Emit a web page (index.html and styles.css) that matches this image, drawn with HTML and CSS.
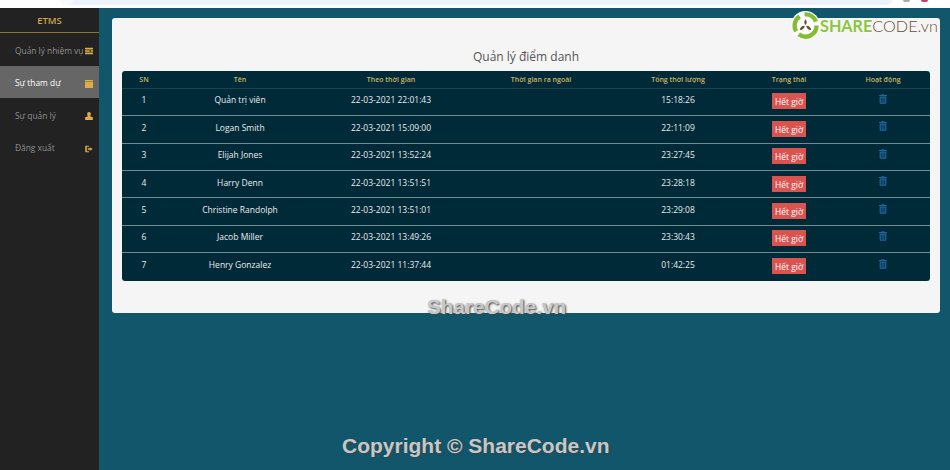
FILE: index.html
```html
<!DOCTYPE html>
<html lang="vi">
<head>
    <meta charset="UTF-8">
    <title>ETMS - Quản lý điểm danh</title>
    <link rel="stylesheet" href="styles.css">
</head>
<body>
    <div class="browser-strip">
        <div class="url-bar"><span class="url-home"></span></div>
        <span class="tool tool-grey"></span>
        <span class="tool tool-pink"></span>
    </div>

    <div class="layout">
        <nav class="sidebar">
            <div class="brand">ETMS</div>
            <a class="nav-item">
                <span>Quản lý nhiệm vụ</span>
                <svg class="nav-icon" viewBox="0 0 10 10"><path d="M0 1h10v2.200H0zM0 4h6v2H0zM7 4h3v2H7zM0 6.900h10V9H0z"/></svg>
            </a>
            <a class="nav-item active">
                <span>Sự tham dự</span>
                <svg class="nav-icon" viewBox="0 0 10 10"><path d="M0 0h10v1.800H0zM0 2.600h10V10H0z"/></svg>
            </a>
            <a class="nav-item">
                <span>Sự quản lý</span>
                <svg class="nav-icon" viewBox="0 0 10 10"><path d="M5 0c1.500 0 2.300 1.100 2.300 2.700 0 1.100-.5 2.100-1 2.700l3.500 1.300V10H.2V6.700l3.500-1.300c-.5-.6-1-1.600-1-2.700C2.700 1.100 3.500 0 5 0z"/></svg>
            </a>
            <a class="nav-item">
                <span>Đăng xuất</span>
                <svg class="nav-icon" viewBox="0 0 10 10"><path d="M1.500 1H5v1.300H2.300v5.400H5V9H1.500C.8 9 .3 8.500.3 7.800V2.200C.3 1.500.8 1 1.500 1zM6 2.800 9.700 5 6 7.200V6H3.500V4H6z"/></svg>
            </a>
        </nav>

        <main class="content">
            <section class="card">
                <h1 class="card-title">Quản lý điểm danh</h1>
                <table class="attendance">
                    <thead>
                        <tr>
                            <th class="col-sn">SN</th>
                            <th class="col-name">Tên</th>
                            <th class="col-in">Theo thời gian</th>
                            <th class="col-out">Thời gian ra ngoài</th>
                            <th class="col-total">Tổng thời lượng</th>
                            <th class="col-status">Trạng thái</th>
                            <th class="col-action">Hoạt động</th>
                        </tr>
                    </thead>
                    <tbody>
                        <tr>
                            <td>1</td><td>Quản trị viên</td><td>22-03-2021 22:01:43</td><td></td><td>15:18:26</td>
                            <td><span class="badge">Hết giờ</span></td>
                            <td><svg class="trash" viewBox="0 0 10 12"><path d="M3.500 0h3l.5 1h3v1.300H0V1h3zM.8 3h8.400v8c0 .6-.4 1-1 1H1.800c-.6 0-1-.4-1-1zM2.300 4.300v6.400h1V4.300zm2.200 0v6.400h1V4.300zm2.200 0v6.400h1V4.300z"/></svg></td>
                        </tr>
                        <tr>
                            <td>2</td><td>Logan Smith</td><td>22-03-2021 15:09:00</td><td></td><td>22:11:09</td>
                            <td><span class="badge">Hết giờ</span></td>
                            <td><svg class="trash" viewBox="0 0 10 12"><path d="M3.500 0h3l.5 1h3v1.300H0V1h3zM.8 3h8.400v8c0 .6-.4 1-1 1H1.800c-.6 0-1-.4-1-1zM2.300 4.300v6.400h1V4.300zm2.200 0v6.400h1V4.300zm2.200 0v6.400h1V4.300z"/></svg></td>
                        </tr>
                        <tr>
                            <td>3</td><td>Elijah Jones</td><td>22-03-2021 13:52:24</td><td></td><td>23:27:45</td>
                            <td><span class="badge">Hết giờ</span></td>
                            <td><svg class="trash" viewBox="0 0 10 12"><path d="M3.500 0h3l.5 1h3v1.300H0V1h3zM.8 3h8.400v8c0 .6-.4 1-1 1H1.800c-.6 0-1-.4-1-1zM2.300 4.300v6.400h1V4.300zm2.200 0v6.400h1V4.300zm2.200 0v6.400h1V4.300z"/></svg></td>
                        </tr>
                        <tr>
                            <td>4</td><td>Harry Denn</td><td>22-03-2021 13:51:51</td><td></td><td>23:28:18</td>
                            <td><span class="badge">Hết giờ</span></td>
                            <td><svg class="trash" viewBox="0 0 10 12"><path d="M3.500 0h3l.5 1h3v1.300H0V1h3zM.8 3h8.400v8c0 .6-.4 1-1 1H1.800c-.6 0-1-.4-1-1zM2.300 4.300v6.400h1V4.300zm2.200 0v6.400h1V4.300zm2.200 0v6.400h1V4.300z"/></svg></td>
                        </tr>
                        <tr>
                            <td>5</td><td>Christine Randolph</td><td>22-03-2021 13:51:01</td><td></td><td>23:29:08</td>
                            <td><span class="badge">Hết giờ</span></td>
                            <td><svg class="trash" viewBox="0 0 10 12"><path d="M3.500 0h3l.5 1h3v1.300H0V1h3zM.8 3h8.400v8c0 .6-.4 1-1 1H1.800c-.6 0-1-.4-1-1zM2.300 4.300v6.400h1V4.300zm2.200 0v6.400h1V4.300zm2.200 0v6.400h1V4.300z"/></svg></td>
                        </tr>
                        <tr>
                            <td>6</td><td>Jacob Miller</td><td>22-03-2021 13:49:26</td><td></td><td>23:30:43</td>
                            <td><span class="badge">Hết giờ</span></td>
                            <td><svg class="trash" viewBox="0 0 10 12"><path d="M3.500 0h3l.5 1h3v1.300H0V1h3zM.8 3h8.400v8c0 .6-.4 1-1 1H1.800c-.6 0-1-.4-1-1zM2.300 4.300v6.400h1V4.300zm2.200 0v6.400h1V4.300zm2.200 0v6.400h1V4.300z"/></svg></td>
                        </tr>
                        <tr>
                            <td>7</td><td>Henry Gonzalez</td><td>22-03-2021 11:37:44</td><td></td><td>01:42:25</td>
                            <td><span class="badge">Hết giờ</span></td>
                            <td><svg class="trash" viewBox="0 0 10 12"><path d="M3.500 0h3l.5 1h3v1.300H0V1h3zM.8 3h8.400v8c0 .6-.4 1-1 1H1.800c-.6 0-1-.4-1-1zM2.300 4.300v6.400h1V4.300zm2.200 0v6.400h1V4.300zm2.200 0v6.400h1V4.300z"/></svg></td>
                        </tr>
                    </tbody>
                </table>
            </section>
        </main>
    </div>

    <!-- watermarks lie over the page -->
    <div class="logo">
        <svg class="logo-mark" viewBox="0 0 30 30">
            <circle cx="15" cy="15" r="15" fill="#fff"/>
            <g fill="none" stroke="#84bd34" stroke-width="4.500">
                <path d="M14 3.500A11.500 11.500 0 0 1 25.800 11"/>
                <path d="M26.500 15A11.500 11.500 0 0 1 8 24.100"/>
                <path d="M5.300 21A11.500 11.500 0 0 1 9 5.500"/>
            </g>
            <path d="M15 8.500c1.700 1.900 1.700 4.300 0 6-1.700-1.700-1.700-4.100 0-6zM9 19.500c.4-2.700 2.500-4.300 5.300-4.300-.4 2.800-2.600 4.700-5.300 4.300zM21 19.500c-2.700.4-4.900-1.500-5.300-4.300 2.800 0 4.900 1.600 5.300 4.300z" fill="#6f4c2c"/>
        </svg>
        <span class="logo-text"><b>SHARE</b>CODE<i>.vn</i></span>
    </div>
    <div class="mark mark-small">ShareCode.vn</div>
    <div class="mark mark-large">Copyright © ShareCode.vn</div>
</body>
</html>
```

FILE: styles.css
```css
html, body {
    margin: 0;
    height: 100%;
    overflow: hidden;
}
body {
    font-family: "Open Sans", "Noto Sans", sans-serif;
    font-size: 8.5px;
    background: #11566b;
    color: #fff;
    display: flex;
    flex-direction: column;
}
.browser-strip {
    height: 8px;
    background: #fff;
    padding-left: 60px;
    display: flex;
    flex: none;
}
.url-bar {
    width: 832px;
    height: 4.500px;
    background: #eef2fa;
    border-radius: 0 0 8px 8px;
    margin-right: 11px;
}
.url-home {
    display: block;
    width: 13px;
    height: 4.500px;
    background: #f8f9fd;
    border-radius: 0 0 7px 7px;
}
.tool {
    height: 1.500px;
    border-radius: 0 0 2px 2px;
}
.tool-grey {
    width: 7px;
    margin-right: 11px;
    background: #aaa;
}
.tool-pink {
    width: 7px;
    height: 2px;
    background: #c2406e;
}
.layout {
    flex: 1;
    display: flex;
    min-height: 0;
}

/* sidebar */
.sidebar {
    width: 99px;
    flex: none;
    background: #222;
}
.brand {
    height: 25px;
    line-height: 25px;
    box-sizing: border-box;
    text-align: center;
    font-size: 9.500px;
    font-weight: 600;
    color: #d1a645;
    border-bottom: 1px solid #8a7235;
}
.nav-item {
    display: flex;
    justify-content: space-between;
    align-items: center;
    height: 32.500px;
    padding: 2px 6px 0 15px;
    box-sizing: border-box;
    font-size: 8.400px;
    color: #8f8f8f;
}
.nav-item.active {
    background: #666;
    color: #fff;
}
.nav-icon {
    width: 8px;
    height: 8px;
    margin-top: 2px;
    fill: #dcae46;
    flex: none;
}

/* content */
.content {
    flex: 1;
    padding: 10px 10px 0 13px;
}
.card {
    height: 295px;
    box-sizing: border-box;
    padding: 0 10px;
    background: #f5f5f5;
    border-radius: 3px;
    color: #fff;
}
.card-title {
    margin: 0;
    height: 53px;
    padding-top: 31px;
    box-sizing: border-box;
    text-align: center;
    font-size: 12px;
    line-height: 15px;
    font-weight: 400;
    color: #555;
}
.attendance {
    width: 808px;
    table-layout: fixed;
    border-collapse: separate;
    border-spacing: 0;
    background: #012a39;
    border-radius: 3px;
}
.attendance th {
    height: 17.800px;
    padding: 0;
    box-sizing: border-box;
    font-size: 7px;
    font-weight: 600;
    color: #cdb561;
    border-bottom: 1px solid #1c4351;
    text-align: center;
}
.attendance td {
    height: 27.400px;
    padding: 0 0 4px;
    box-sizing: border-box;
    text-align: center;
    vertical-align: middle;
    color: #e8ecee;
    border-bottom: 1px solid #6f8c95;
}
.attendance tr:last-child td {
    border-bottom: none;
}
.col-sn { width: 44px; }
.col-name { width: 148px; }
.col-in { width: 154px; }
.col-out { width: 146px; }
.col-total { width: 128px; }
.col-status { width: 94px; }
.col-action { width: 94px; }

.badge {
    display: inline-block;
    width: 34px;
    height: 16px;
    line-height: 17px;
    margin-top: 3px;
    background: #d9534f;
    color: #fff;
    vertical-align: middle;
}
.trash {
    display: block;
    width: 8px;
    height: 10px;
    margin: -2px auto 0;
    fill: #1f669e;
}

/* watermarks */
.logo {
    position: absolute;
    top: 11px;
    left: 791px;
    display: flex;
    align-items: center;
}
.logo-mark {
    width: 29px;
    height: 29px;
}
.logo-text {
    font-family: "Lato", sans-serif;
    font-size: 16.200px;
    font-weight: 300;
    line-height: 20px;
    color: #6b4a2b;
    text-shadow: 0 0 2px #fff;
}
.logo-text b {
    color: #8cc63f;
    font-weight: 700;
}
.logo-text i {
    font-style: normal;
}
.mark {
    position: absolute;
    font-family: "Liberation Sans", Arial, sans-serif;
    font-size: 20.700px;
    line-height: 24px;
    font-weight: 700;
    color: #c4c8ca;
    text-shadow: 1px 1px 2px #444;
    white-space: nowrap;
}
.mark-small {
    left: 427px;
    top: 295px;
}
.mark-large {
    left: 342px;
    top: 434px;
    font-size: 21px;
}
```
